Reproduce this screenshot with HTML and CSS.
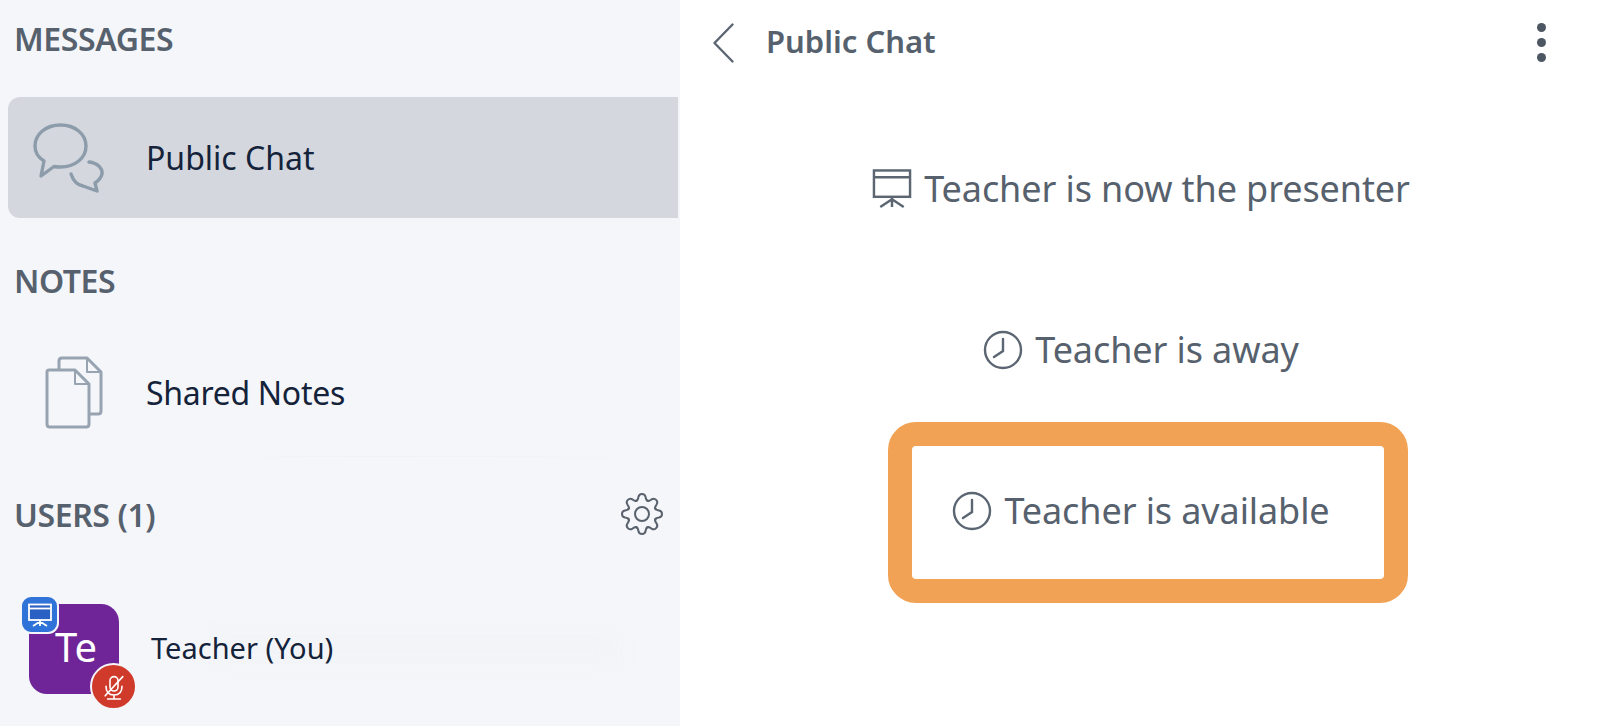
FILE: index.html
```html
<!DOCTYPE html>
<html lang="en">
<head>
<meta charset="utf-8">
<title>Public Chat</title>
<link rel="stylesheet" href="styles.css">
</head>
<body>
<div class="app">
  <aside class="sidebar">
    <div class="section-head first"><span>MESSAGES</span></div>
    <div class="row selected">
      <span class="row-icon">
        <svg class="chat-icon" viewBox="0 0 71 70" fill="none" stroke="#8d9cab" stroke-width="3.400" stroke-linejoin="round" stroke-linecap="round">
          <path d="M27.500 2C13 2 2 11 2 23C2 30 6 35 11 38L8 53L21 43.500C23 44 25 44 27.500 44C42 44 53 35 53 23C53 11 42 2 27.500 2Z"/>
          <path d="M56 39C65 40 70 46 69 51C68 55 65 58 62 60L64 68L50 63C44 62 40 57 38 51"/>
        </svg>
      </span>
      <span class="row-label">Public Chat</span>
    </div>
    <div class="section-head notes"><span>NOTES</span></div>
    <div class="row notes-row">
      <span class="row-icon">
        <svg class="notes-icon" viewBox="0 0 58 73" fill="none" stroke="#97a3b0" stroke-width="3" stroke-linejoin="round">
          <path d="M14 14V5Q14 2 17 2H42L56 16V55Q56 58 53 58H45"/>
          <path d="M42 2V16H56" stroke-width="2"/>
          <path d="M4 14H30L44 28V68Q44 71 41 71H5Q2 71 2 68V16Q2 14 4 14Z"/>
          <path d="M30 14V28H44" stroke-width="2"/>
        </svg>
      </span>
      <span class="row-label">Shared Notes</span>
    </div>
    <div class="divider"></div>
    <div class="section-head users">
      <span>USERS (1)</span>
      <svg class="gear" viewBox="-21 -21 42 42" fill="none" stroke="#58616c" stroke-width="2" stroke-linejoin="round" stroke-linecap="round">
        <defs>
          <path id="gear-tooth" d="M-6.120-13Q-4-13.500-3.600-17Q-3-20 0-20Q3-20 3.600-17Q4-13.500 6.120-13"/>
        </defs>
        <circle r="7"/>
        <use href="#gear-tooth"/>
        <use href="#gear-tooth" transform="rotate(45)"/>
        <use href="#gear-tooth" transform="rotate(90)"/>
        <use href="#gear-tooth" transform="rotate(135)"/>
        <use href="#gear-tooth" transform="rotate(180)"/>
        <use href="#gear-tooth" transform="rotate(225)"/>
        <use href="#gear-tooth" transform="rotate(270)"/>
        <use href="#gear-tooth" transform="rotate(315)"/>
      </svg>
    </div>
    <div class="user-row">
      <div class="avatar">
        <span class="avatar-text">Te</span>
        <span class="badge-presenter">
          <svg viewBox="0 0 28 28" fill="none" stroke="#fff" stroke-width="1.800">
            <rect x="3" y="3.500" width="22" height="15.500" fill="#2a5fc4"/>
            <path d="M3 7.500H25"/>
            <path d="M14 19V25M14 20.500L7 25M14 20.500L21 25"/>
          </svg>
        </span>
        <span class="badge-muted">
          <svg viewBox="0 0 40 40" fill="none" stroke="#fff" stroke-width="2" stroke-linecap="round">
            <rect x="15" y="7" width="10" height="18" rx="5"/>
            <path d="M10 19C10 27 14 30 20 30C26 30 30 27 30 19M20 30V34M12 35H28"/>
            <path d="M9 31L31 7"/>
          </svg>
        </span>
      </div>
      <span class="user-name">Teacher (You)</span>
    </div>
  </aside>
  <main class="chat">
    <header class="chat-head">
      <svg class="back" viewBox="0 0 21 40" fill="none" stroke="#5b6672" stroke-width="2.400" stroke-linecap="round" stroke-linejoin="round"><path d="M19.500 1.500L1.500 20L19.500 38.500"/></svg>
      <h1 class="chat-title">Public Chat</h1>
      <span class="dots"><i></i><i></i><i></i></span>
    </header>
    <div class="messages">
      <p class="msg msg-presenter">
        <svg class="msg-icon" viewBox="0 0 40 41" fill="none" stroke="#5b6672" stroke-width="2.500">
          <rect x="1.500" y="1.500" width="37" height="27"/>
          <path d="M1.500 8.500H38.500"/>
          <path d="M20 28.500V39M20 31L8 39M20 31L32 39"/>
        </svg>
        <span>Teacher is now the presenter</span>
      </p>
      <p class="msg msg-away">
        <svg class="msg-icon" viewBox="0 0 40 40" fill="none" stroke="#5b6672" stroke-width="2.400" stroke-linecap="round">
          <circle cx="20" cy="20" r="18"/>
          <path d="M20 9V21L11 27"/>
        </svg>
        <span>Teacher is away</span>
      </p>
      <p class="msg msg-available">
        <svg class="msg-icon" viewBox="0 0 40 40" fill="none" stroke="#5b6672" stroke-width="2.400" stroke-linecap="round">
          <circle cx="20" cy="20" r="18"/>
          <path d="M20 9V21L11 27"/>
        </svg>
        <span>Teacher is available</span>
      </p>
    </div>
    <div class="highlight"></div>
  </main>
</div>
</body>
</html>
```
FILE: styles.css
```css
* { box-sizing: border-box; }
html, body { margin: 0; height: 100%; background: #fff; }
body { overflow: hidden; font-family: "Noto Sans", "Open Sans", sans-serif; }

.app { display: flex; width: 1598px; height: 726px; }

.sidebar { width: 680px; flex: none; background: #f4f6fa; display: flex; flex-direction: column; padding-left: 8px; padding-right: 2px; }

.section-head { height: 40px; display: flex; align-items: center; justify-content: space-between; padding: 0 16px 0 6px; font-size: 32px; font-weight: 600; color: #56616d; letter-spacing: -0.4px; }
.section-head.first { margin-top: 18px; }
.section-head.notes { margin-top: 42px; }
.section-head.users { margin-top: 37px; }

.row { height: 121px; display: flex; align-items: center; color: #14233a; font-size: 32px; }
.row.selected { margin-top: 39px; background: #d4d7de; border-radius: 12px 0 0 12px; }
.row.notes-row { margin-top: 32px; letter-spacing: -0.3px; }
.row-icon { width: 138px; flex: none; display: flex; }
.chat-icon { width: 71px; height: 70px; margin-left: 25px; }
.notes-icon { width: 58px; height: 73px; margin-left: 37px; }

.divider { height: 1px; margin: 3px 0 0 220px; background: linear-gradient(90deg, #f4f6fa, #eff1f5 30%, #f4f6fa); }

.gear { width: 42px; height: 42px; position: relative; left: 1px; }

.user-row { margin-top: 70px; display: flex; align-items: center; padding-left: 21px; position: relative; }
.user-row::after { content: ""; position: absolute; left: 200px; right: 60px; top: 30px; height: 30px; background: #f2f4f7; filter: blur(10px); }
.avatar { width: 90px; height: 90px; flex: none; background: #6f2597; border-radius: 18px; position: relative; display: flex; align-items: center; justify-content: center; color: #fff; font-size: 40px; }
.avatar-text { position: relative; top: -3px; left: 2px; }
.badge-presenter { position: absolute; left: -9px; top: -9px; width: 39px; height: 39px; border-radius: 11px; background: #2f72d8; border: 2px solid #f4f6fa; display: flex; align-items: center; justify-content: center; }
.badge-presenter svg { width: 28px; height: 28px; }
.badge-muted { position: absolute; left: 61px; top: 59px; width: 47px; height: 47px; border-radius: 50%; background: #cf3a2a; border: 2px solid #f4f6fa; display: flex; align-items: center; justify-content: center; }
.badge-muted svg { width: 32px; height: 32px; }
.user-name { position: relative; z-index: 1; margin-left: 32px; top: -2px; font-size: 29px; color: #14233a; }

.chat { flex: 1; position: relative; min-width: 0; }
.chat-head { height: 85px; display: flex; align-items: center; padding: 0 52px 0 33px; }
.back { width: 21px; height: 40px; flex: none; }
.chat-title { margin: 0 0 3px 32px; flex: 1; font-size: 31px; font-weight: 600; color: #56616d; }
.dots { display: flex; flex-direction: column; gap: 6px; }
.dots i { display: block; width: 9px; height: 9px; border-radius: 50%; background: #4d5763; }

.messages { display: flex; flex-direction: column; align-items: center; padding-left: 4px; }
.msg { margin: 0; display: flex; align-items: center; gap: 12px; font-size: 36px; color: #56616d; letter-spacing: -0.1px; line-height: 48px; white-space: nowrap; }
.msg-icon { width: 40px; height: 40px; flex: none; }
.msg-presenter { margin-top: 80px; }
.msg-away { margin-top: 113px; }
.msg-available { margin-top: 113px; }

.highlight { position: absolute; left: 208px; top: 422px; width: 520px; height: 181px; border: 24px solid #f2a254; border-radius: 28px; }
```
